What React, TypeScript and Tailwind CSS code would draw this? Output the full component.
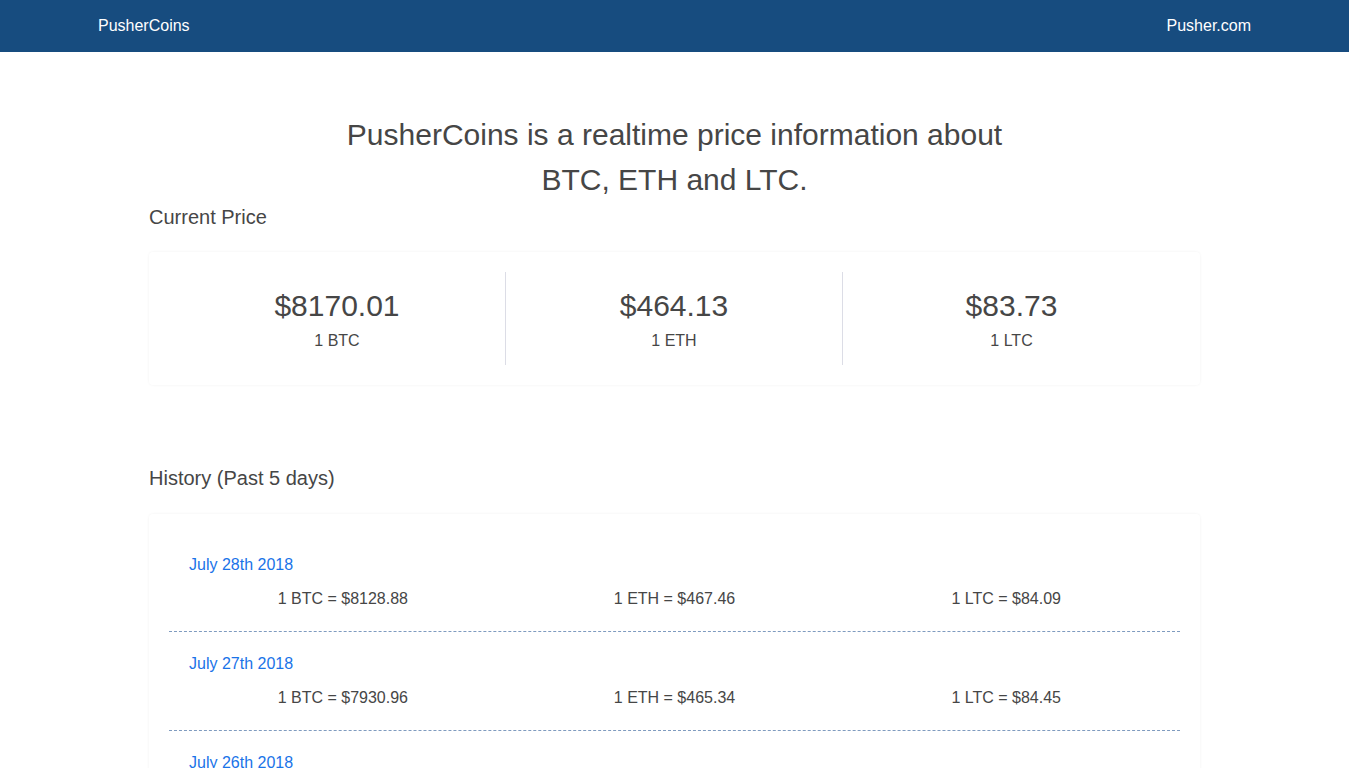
const current = [
  { price: "$8170.01", label: "1 BTC" },
  { price: "$464.13", label: "1 ETH" },
  { price: "$83.73", label: "1 LTC" },
];

const history = [
  { date: "July 28th 2018", btc: "8128.88", eth: "467.46", ltc: "84.09" },
  { date: "July 27th 2018", btc: "7930.96", eth: "465.34", ltc: "84.45" },
  { date: "July 26th 2018", btc: "8172.47", eth: "479.21", ltc: "87.12" },
  { date: "July 25th 2018", btc: "8404.91", eth: "470.03", ltc: "86.58" },
  { date: "July 24th 2018", btc: "8217.63", eth: "479.67", ltc: "86.02" },
];

export default function App() {
  return (
    <div className="w-[1349px] bg-white font-['Liberation_Sans',Arial,sans-serif] text-[#464646]">
      {/* navbar */}
      <nav className="flex h-[52px] items-center justify-between bg-[#174c7f] px-[98px] text-[16px] text-white">
        <span>PusherCoins</span>
        <span>Pusher.com</span>
      </nav>

      <main className="mx-auto w-[1051px] pb-[142px]">
        <h1 className="mx-auto mt-[60px] w-[700px] text-center text-[30px] leading-[45px]">
          PusherCoins is a realtime price information about BTC, ETH and LTC.
        </h1>

        <h2 className="mt-[3px] text-[20px] leading-[24px]">Current Price</h2>

        <div className="mt-[23px] rounded-[4px] px-5 py-5 shadow-[0_0_3px_rgba(0,0,0,0.06)]">
          <div className="grid grid-cols-3">
            {current.map((c, i) => (
              <div
                key={c.label}
                className={
                  "flex h-[93px] flex-col items-center pt-[16px] " +
                  (i < 2 ? "border-r border-[#dcdde6]" : "")
                }
              >
                <div className="text-[30px] leading-[36px]">{c.price}</div>
                <div className="mt-[5px] text-[16px] leading-[24px]">{c.label}</div>
              </div>
            ))}
          </div>
        </div>

        <h2 className="mt-[81px] text-[20px] leading-[24px]">History (Past 5 days)</h2>

        <div className="mt-[24px] rounded-[4px] px-5 pt-[19px] pb-[19px] shadow-[0_0_3px_rgba(0,0,0,0.06)]">
          {history.map((h, i) => (
            <div
              key={h.date}
              className={
                "pt-[20px] pb-[20px] " +
                (i < history.length - 1 ? "border-b border-dashed border-[#7f9bbf]" : "")
              }
            >
              <div className="pl-5 text-[16px] leading-[24px] text-[#1a73e8]">{h.date}</div>
              <div className="mt-[10px] grid grid-cols-3 px-[8px] text-center text-[16px] leading-[24px]">
                <span>1 BTC = ${h.btc}</span>
                <span>1 ETH = ${h.eth}</span>
                <span>1 LTC = ${h.ltc}</span>
              </div>
            </div>
          ))}
        </div>
      </main>
    </div>
  );
}
